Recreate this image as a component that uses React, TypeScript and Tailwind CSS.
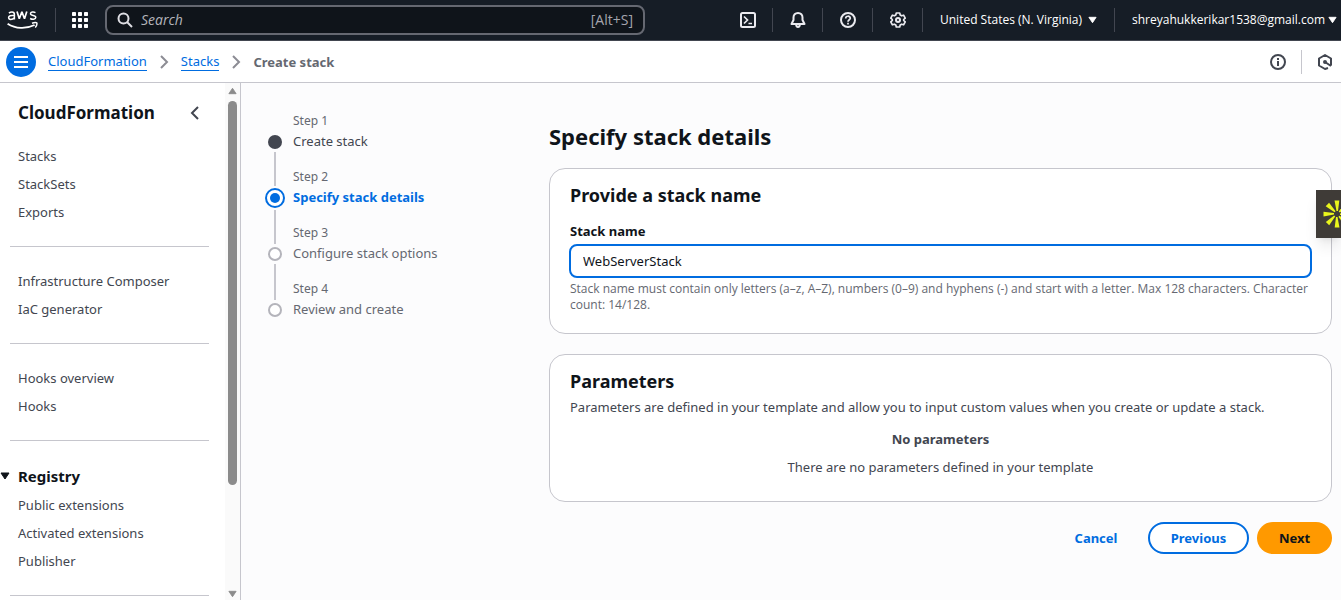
import React, { useState } from "react";

function AwsLogo() {
  return (
    <svg viewBox="0 0 32 20" className="h-5 w-8" fill="none" stroke="#fff" aria-hidden="true">
      <path d="M1.900 3C3 2.300 4 2 5 2c1.600 0 2.400.9 2.400 2.400v5.200M7.400 5.600C4 5 1.600 5.800 1.600 7.600c0 2.400 3.800 2.400 5.800.1" strokeWidth="1.500" />
      <path d="M10 1.500l2.300 7.300 2.600-7 2.600 7 2.300-7.300" strokeWidth="1.700" strokeLinejoin="bevel" />
      <path d="M28.500 2.600c-1.800-.9-5-.9-5 1.100 0 2.400 5.300 1.200 5.300 3.600 0 2.400-3.600 2.300-5.700 1.200" strokeWidth="1.500" />
      <path d="M.6 13.700c8 5.200 18.500 5.400 27 1.300" strokeWidth="1.900" />
      <path d="M25 13.200c1.800-.7 4.300-.8 4.800-.3.5.6-.2 3.200-1.600 4.600" strokeWidth="1.500" />
    </svg>
  );
}

function GridIcon() {
  return (
    <svg viewBox="0 0 16 16" className="size-4" fill="#fff" aria-hidden="true">
      {[0, 6, 12].map((y) => [0, 6, 12].map((x) => <rect key={`${x}-${y}`} x={x} y={y} width="4" height="4" rx=".7" />))}
    </svg>
  );
}

function Icon({ children, className = "size-4" }: { children: React.ReactNode; className?: string }) {
  return (
    <svg viewBox="0 0 16 16" className={className} fill="none" stroke="currentColor" strokeWidth="2" aria-hidden="true">
      {children}
    </svg>
  );
}

function Caret({ className }: { className: string }) {
  return (
    <svg viewBox="0 0 10 8" className={className} fill="currentColor" stroke="currentColor" strokeLinejoin="round" aria-hidden="true">
      <path d="M1 1h8L5 7z" />
    </svg>
  );
}

function HeaderButton({ label, children }: { label: string; children: React.ReactNode }) {
  return (
    <button aria-label={label} className="flex h-6 w-[50px] items-center justify-center border-r border-[#424650] text-[#ebebf0]">
      {children}
    </button>
  );
}

function Header() {
  return (
    <header className="flex h-[41px] shrink-0 items-center border-b border-[#424650] bg-[#161d26] font-['Open_Sans','Noto_Sans',sans-serif] text-white">
      <a href="#home" aria-label="AWS" className="flex h-6 w-14 shrink-0 items-center border-r border-[#424650] pl-[7px]">
        <AwsLogo />
      </a>
      <button aria-label="Services" className="flex w-12 shrink-0 justify-center">
        <GridIcon />
      </button>
      <label className="ml-px flex h-[30px] w-[540px] items-center rounded-lg border-2 border-[#656871] bg-[#0f141a] px-2.5 text-[#a4a4ad]">
        <Icon className="size-4 shrink-0 text-[#dedee3]">
          <circle cx="6.5" cy="6.500" r="5" />
          <path d="M10 10l5 5" />
        </Icon>
        <input aria-label="Search" placeholder="Search" className="ml-2 min-w-0 flex-1 bg-transparent text-sm italic outline-none placeholder:text-[#b4b4bb]" />
        <span className="text-sm">[Alt+S]</span>
      </label>
      <nav aria-label="Account" className="ml-auto flex shrink-0 items-center">
        <HeaderButton label="CloudShell">
          <Icon>
            <rect x="1" y="1" width="14" height="14" rx="1.500" />
            <path d="M4 4.500L7.500 8 4 11.500M8.500 11.500H12" strokeWidth="1.700" />
          </Icon>
        </HeaderButton>
        <HeaderButton label="Notifications">
          <Icon>
            <path d="M8 1C5.200 1 3.500 3 3.500 5.500V8L1.500 12h13l-2-4V5.500C12.500 3 10.800 1 8 1z" strokeLinejoin="round" />
            <path d="M6.200 12.500c0 3.300 3.600 3.300 3.600 0" />
          </Icon>
        </HeaderButton>
        <HeaderButton label="Help">
          <Icon>
            <circle cx="8" cy="8" r="7" />
            <path d="M5.700 6.500C5.700 3.500 10.300 3.500 10.300 6.300 10.300 7.800 8 7.800 8 9.800M8 10.700v1.900" strokeWidth="1.700" />
          </Icon>
        </HeaderButton>
        <HeaderButton label="Settings">
          <Icon>
            <path d="M6.300 1h3.400l.5 2 1.400.8 2-.6 1.600 2.900L13.700 7.500v1l1.500 1.400-1.600 2.900-2-.6-1.400.8-.5 2H6.300l-.5-2-1.400-.8-2 .6L.8 9.900l1.500-1.400v-1L.8 6.100l1.600-2.900 2 .6L5.800 3z" strokeLinejoin="round" strokeWidth="1.700" />
            <circle cx="8" cy="8" r="2" />
          </Icon>
        </HeaderButton>
        <button className="flex h-6 w-[192px] items-center justify-between border-r border-[#424650] px-[17px] text-xs font-medium whitespace-nowrap">
          United States (N. Virginia)
          <Caret className="h-2 w-[9px]" />
        </button>
        <button className="flex h-6 w-[226px] items-center justify-between pr-1 pl-[17px] text-xs font-medium whitespace-nowrap">
          shreyahukkerikar1538@gmail.com
          <Caret className="h-2 w-[9px] shrink-0" />
        </button>
      </nav>
    </header>
  );
}

function Chevron() {
  return (
    <Icon className="mx-[9px] size-4 text-[#8c8c94]">
      <path d="M5 2l6 6-6 6" />
    </Icon>
  );
}

function Breadcrumbs() {
  return (
    <div className="flex h-[42px] shrink-0 items-center border-b border-[#c6c6cd] bg-white text-[13px] leading-5">
      <button aria-label="Open navigation" className="ml-1.5 flex size-[30px] items-center justify-center rounded-full bg-[#006ce0] text-white">
        <Icon>
          <path d="M1 3h14M1 8h14M1 13h14" />
        </Icon>
      </button>
      <nav aria-label="Breadcrumbs" className="ml-3 flex items-center">
        <a href="#cloudformation" className="border-b border-[#006ce0] leading-[18px] text-[#006ce0]">CloudFormation</a>
        <Chevron />
        <a href="#stacks" className="border-b border-[#006ce0] leading-[18px] text-[#006ce0]">Stacks</a>
        <Chevron />
        <span className="font-bold text-[#656871]">Create stack</span>
      </nav>
      <div className="ml-auto flex items-center text-[#424650]">
        <button aria-label="Info" className="flex h-6 w-8 items-center border-r border-[#c6c6cd]">
          <Icon>
            <circle cx="8" cy="8" r="7" />
            <path d="M8 4v2M8 7v5" />
          </Icon>
        </button>
        <button aria-label="Amazon Q" className="flex w-[39px] items-center pl-[15px]">
          <Icon>
            <path d="M11 14l-3 1-6-3.500v-7L8 1l6 3.500v7" strokeLinejoin="round" />
            <path d="M8 8l6 4" />
            <circle cx="8" cy="8" r="1" />
          </Icon>
        </button>
      </div>
    </div>
  );
}

function NavLinks({ items }: { items: string[] }) {
  return (
    <ul>
      {items.map((item) => (
        <li key={item} className="flex h-7 items-center pl-[18px]">
          <a href="#nav" className="text-[13px] leading-5 text-[#424650]">{item}</a>
        </li>
      ))}
    </ul>
  );
}

function Divider() {
  return <hr className="my-5 mr-4 ml-2.5 border-[#c6c6cd]" />;
}

function Sidebar() {
  return (
    <aside className="flex w-[241px] shrink-0 border-r border-[#c6c6cd] bg-white">
      <nav aria-label="CloudFormation" className="min-w-0 flex-1 overflow-hidden">
        <div className="flex h-[59px] items-center justify-between pt-px pr-[22px] pl-[18px]">
          <h2 className="text-[17px] leading-6 font-bold text-[#0f141a]">CloudFormation</h2>
          <button aria-label="Close navigation" className="text-[#424650]">
            <Icon>
              <path d="M11 2L5 8l6 6" />
            </Icon>
          </button>
        </div>
        <NavLinks items={["Stacks", "StackSets", "Exports"]} />
        <Divider />
        <NavLinks items={["Infrastructure Composer", "IaC generator"]} />
        <Divider />
        <NavLinks items={["Hooks overview", "Hooks"]} />
        <Divider />
        <button className="flex h-[30px] items-center gap-2 text-[15px] font-bold text-[#0f141a]">
          <Caret className="h-2 w-2.5" />
          Registry
        </button>
        <NavLinks items={["Public extensions", "Activated extensions", "Publisher"]} />
        <Divider />
      </nav>
      <div aria-hidden="true" className="flex w-[15px] shrink-0 flex-col items-center bg-[#fafafa] pt-1 pb-0.5 text-[#8b8b8b]">
        <Caret className="h-2 w-[9px] rotate-180" />
        <div className="mt-1.5 mb-[105px] w-[9px] flex-1 rounded-full bg-[#8b8b8b]" />
        <Caret className="h-2 w-[9px]" />
      </div>
    </aside>
  );
}

const steps = [
  { name: "Create stack", state: "done" },
  { name: "Specify stack details", state: "active" },
  { name: "Configure stack options", state: "todo" },
  { name: "Review and create", state: "todo" },
];

const nameStyles: Record<string, string> = {
  done: "text-[#424650]",
  active: "font-bold text-[#006ce0]",
  todo: "text-[#656871]",
};

function Marker({ state }: { state: string }) {
  if (state === "active") {
    return (
      <span className="flex size-5 items-center justify-center rounded-full border-2 border-[#006ce0] bg-white">
        <span className="size-2.5 rounded-full bg-[#006ce0]" />
      </span>
    );
  }
  return (
    <span className="-my-0.5 flex size-5 items-center justify-center">
      <span className={state === "done" ? "size-3.5 rounded-full bg-[#424650]" : "size-3.5 rounded-full border-2 border-[#b4b4bb] bg-white"} />
    </span>
  );
}

function Steps() {
  return (
    <ol className="w-[284px] shrink-0 pt-[30px]">
      {steps.map((step, i) => (
        <li key={step.name} className="flex h-14 gap-2">
          <div className="flex w-5 flex-col items-center">
            <span className={`mb-0.5 w-0.5 ${step.state === "active" ? "h-[17px]" : "h-[19px]"} ${i > 0 ? "bg-[#c6c6cd]" : ""}`} />
            <Marker state={step.state} />
            <span className={i < steps.length - 1 ? "mt-0.5 w-0.5 flex-1 bg-[#c6c6cd]" : "flex-1"} />
          </div>
          <div>
            <div className="text-xs leading-4 text-[#656871]">Step {i + 1}</div>
            <div className={`mt-0.5 text-[13px] leading-5 ${nameStyles[step.state]}`}>{step.name}</div>
          </div>
        </li>
      ))}
    </ol>
  );
}

function StackForm() {
  const [name, setName] = useState("WebServerStack");
  const help = `Stack name must contain only letters (a–z, A–Z), numbers (0–9) and hyphens (-) and start with a letter. Max 128 characters. Character count: ${name.length}/128.`;
  return (
    <form className="min-w-0 flex-1 pt-[35px]" onSubmit={(e) => e.preventDefault()}>
      <h1 className="text-[22px] leading-9 font-bold text-[#0f141a]">Specify stack details</h1>
      <section className="mt-3.5 rounded-2xl border border-[#c6c6cd] bg-white px-5 pt-3.5 pb-5">
        <h2 className="text-lg leading-6 font-bold text-[#0f141a]">Provide a stack name</h2>
        <label htmlFor="stack-name" className="mt-3.5 block text-[13px] leading-5 font-bold text-[#0f141a]">Stack name</label>
        <div className="-mx-px mt-[3px]">
          <input
            id="stack-name"
            value={name}
            onChange={(e) => setName(e.target.value)}
            className="h-[34px] w-full rounded-lg border-2 border-[#006ce0] bg-white px-3 text-[13px] text-[#0f141a] outline-none"
          />
        </div>
        <p className="mt-[3px] font-['Open_Sans','Noto_Sans',sans-serif] text-xs leading-4 text-[#656871]">{help}</p>
      </section>
      <section className="mt-5 rounded-2xl border border-[#c6c6cd] bg-white px-5 pt-3.5 pb-6 text-[13px] leading-5 text-[#424650]">
        <h2 className="text-lg leading-6 font-bold text-[#0f141a]">Parameters</h2>
        <p className="mt-1">Parameters are defined in your template and allow you to input custom values when you create or update a stack.</p>
        <div className="mt-3 text-center">
          <p className="font-bold">No parameters</p>
          <p className="mt-2">There are no parameters defined in your template</p>
        </div>
      </section>
      <div className="mt-5 flex justify-end gap-2 text-[13px] leading-5 font-bold">
        <button type="button" className="h-8 w-[88px] text-[#006ce0]">Cancel</button>
        <button type="button" className="h-8 w-[101px] rounded-full border-2 border-[#006ce0] bg-white text-[#006ce0]">Previous</button>
        <button type="submit" className="h-8 w-[75px] rounded-full bg-[#ff9900] text-[#0f141a]">Next</button>
      </div>
    </form>
  );
}

function FloatingTab() {
  return (
    <button aria-label="Open extension" className="absolute top-[190px] right-0 flex h-12 w-[25px] items-center overflow-hidden bg-[#3f3b37] pl-[7px] shadow-lg">
      <svg viewBox="0 0 28 28" className="size-7 shrink-0" fill="#e9f51c" aria-hidden="true">
        {[0, 45, 90, 135, 180, 225, 270, 315].map((angle) => (
          <path key={angle} d="M11.500.5h4.800l-1.300 10.500h-1.500z" transform={`rotate(${angle} 14 14)`} />
        ))}
      </svg>
    </button>
  );
}

export default function App() {
  return (
    <div className="relative flex h-screen flex-col overflow-hidden bg-[#fcfcfd] font-['Noto_Sans','Open_Sans',sans-serif]">
      <Header />
      <Breadcrumbs />
      <div className="flex min-h-0 flex-1">
        <Sidebar />
        <main className="flex min-w-0 flex-1 overflow-hidden pr-[9px] pl-6">
          <Steps />
          <StackForm />
        </main>
      </div>
      <FloatingTab />
    </div>
  );
}
